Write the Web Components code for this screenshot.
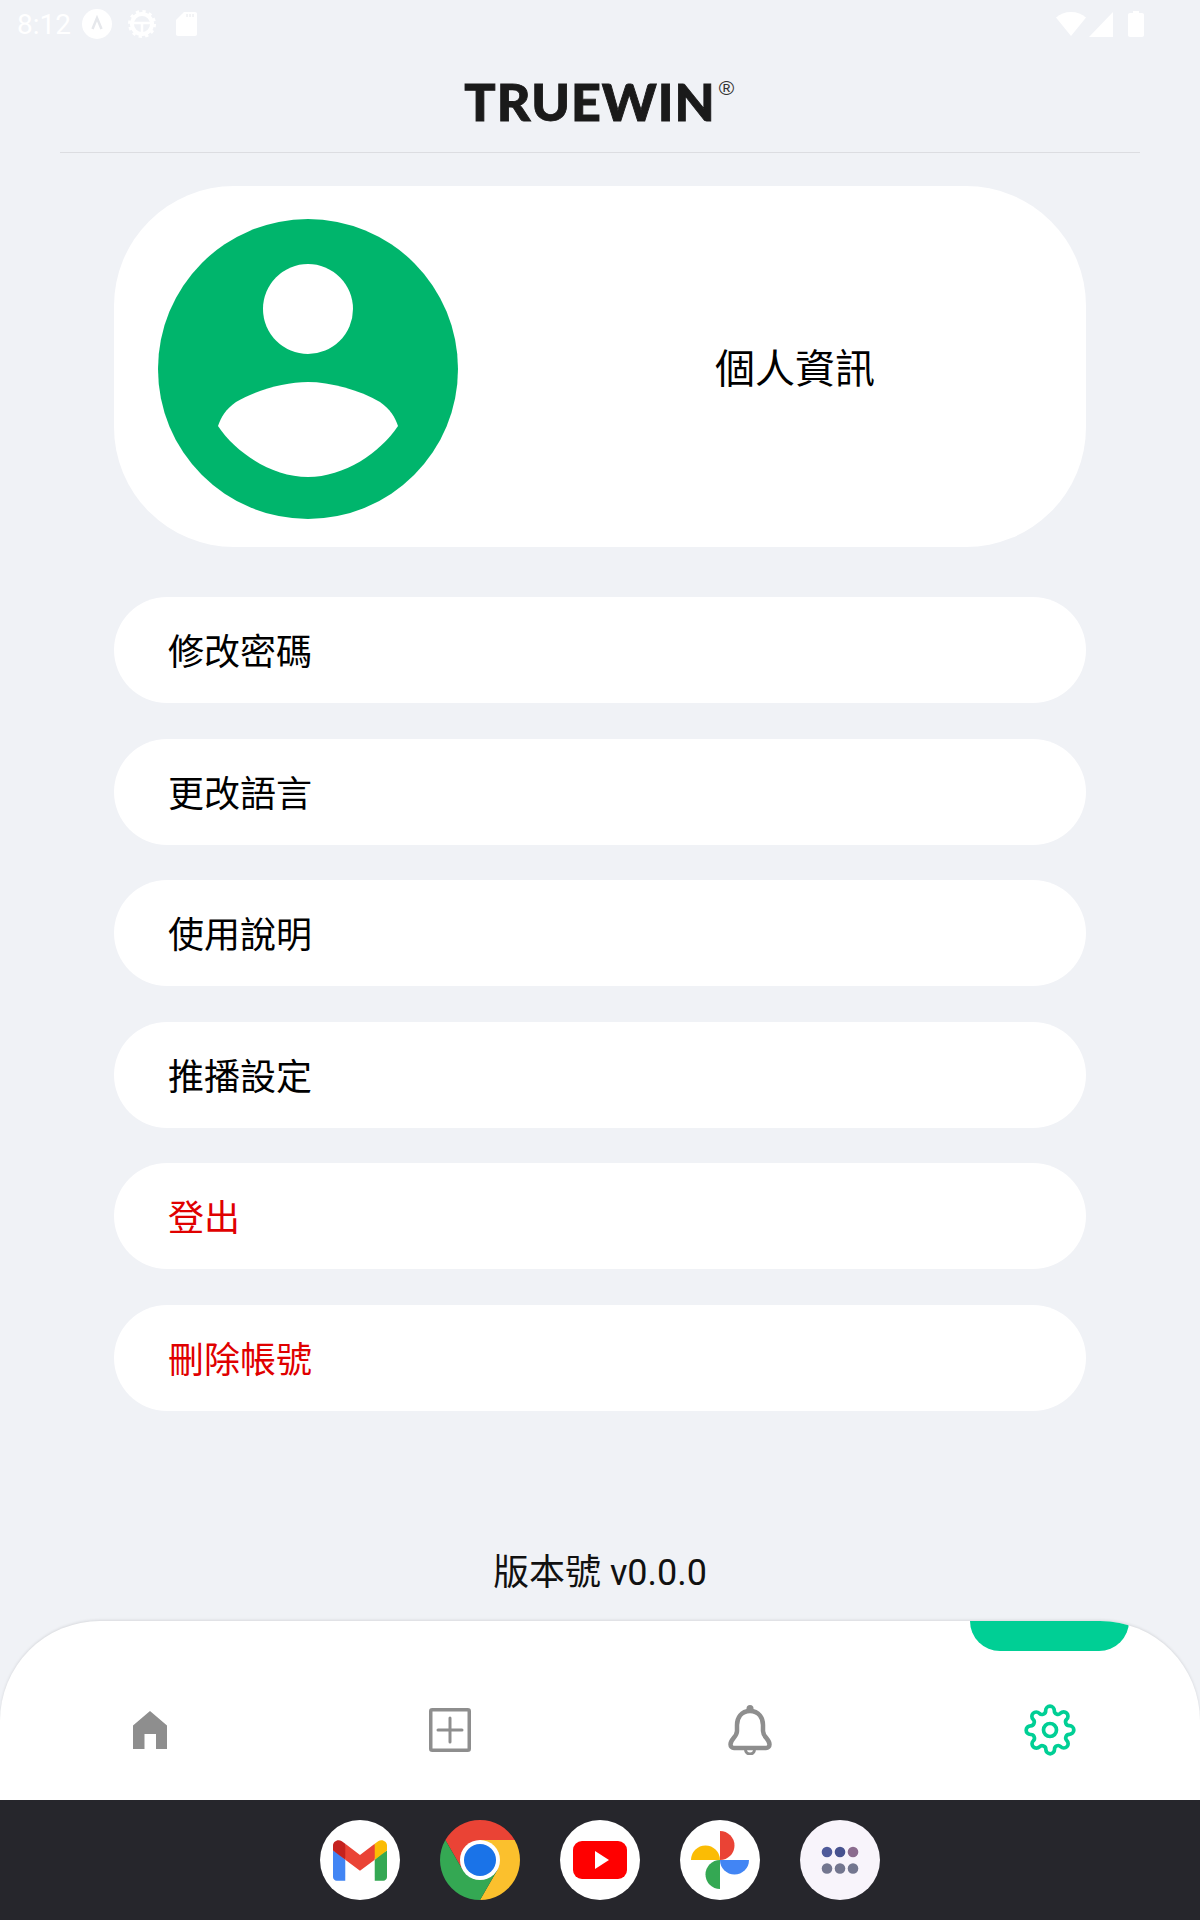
<!DOCTYPE html>
<html lang="zh-Hant">
<head>
<meta charset="utf-8">
<title>TRUEWIN</title>
<style>
  html, body { margin: 0; padding: 0; background: #f0f2f6; }
  body { font-family: Roboto, "Noto Sans CJK TC", sans-serif; }
  app-shell { width: 1200px; height: 1920px; }
</style>
</head>
<body>
<app-shell>
  <status-bar></status-bar>
  <app-header></app-header>
  <profile-card>個人資訊</profile-card>
  <menu-list>
    <menu-row>修改密碼</menu-row>
    <menu-row>更改語言</menu-row>
    <menu-row>使用說明</menu-row>
    <menu-row>推播設定</menu-row>
    <menu-row danger>登出</menu-row>
    <menu-row danger>刪除帳號</menu-row>
  </menu-list>
  <version-label>版本號 v0.0.0</version-label>
  <bottom-nav>
    <nav-item>
      <svg width="34" height="38" viewBox="0 0 34 38"><path fill="#8e8e8e" d="M17 0 34 14.500V38H23V23H11.500V38H0V14.500Z"/></svg>
    </nav-item>
    <nav-item>
      <svg width="42" height="44" viewBox="0 0 42 44" fill="none" stroke="#8e8e8e"><rect x="1.750" y="1.750" width="38.500" height="40.500" rx="1.500" stroke-width="3.500"/><path d="M9 22H33M21 10V34" stroke-width="3" stroke-linecap="round"/></svg>
    </nav-item>
    <nav-item>
      <svg width="44" height="50" viewBox="0 0 44 50" fill="none" stroke="#8e8e8e"><circle cx="22" cy="3.500" r="3.500" fill="#8e8e8e" stroke="none"/><path stroke-width="4.500" d="M22 6C13 6 9 13 9 20V26C9 32 2.500 34 2.500 39.500 2.500 41.500 4 43 6 43H38C40 43 41.500 41.500 41.500 39.500 41.500 34 35 32 35 26V20C35 13 31 6 22 6Z"/><path stroke-width="3" d="M17.500 44.500A4.500 4.500 0 0 0 26.500 44.500"/></svg>
    </nav-item>
    <nav-item active>
      <svg width="52" height="52" viewBox="0 0 24 24" fill="none" stroke="#00cf95" stroke-width="1.700" stroke-linecap="round" stroke-linejoin="round"><circle cx="12" cy="12" r="3"/><path d="M19.400 15a1.650 1.650 0 0 0 .33 1.820l.06.06a2 2 0 0 1 0 2.830 2 2 0 0 1-2.830 0l-.06-.06a1.650 1.650 0 0 0-1.820-.33 1.650 1.650 0 0 0-1 1.510V21a2 2 0 0 1-2 2 2 2 0 0 1-2-2v-.09A1.650 1.650 0 0 0 9 19.400a1.650 1.650 0 0 0-1.820.33l-.06.06a2 2 0 0 1-2.830 0 2 2 0 0 1 0-2.830l.06-.06a1.650 1.650 0 0 0 .33-1.820 1.650 1.650 0 0 0-1.510-1H3a2 2 0 0 1-2-2 2 2 0 0 1 2-2h.09A1.650 1.650 0 0 0 4.600 9a1.650 1.650 0 0 0-.33-1.820l-.06-.06a2 2 0 0 1 0-2.830 2 2 0 0 1 2.830 0l.06.06a1.650 1.650 0 0 0 1.820.33H9a1.650 1.650 0 0 0 1-1.510V3a2 2 0 0 1 2-2 2 2 0 0 1 2 2v.09a1.650 1.650 0 0 0 1 1.510 1.650 1.650 0 0 0 1.820-.33l.06-.06a2 2 0 0 1 2.830 0 2 2 0 0 1 0 2.830l-.06.06a1.650 1.650 0 0 0-.33 1.820V9a1.650 1.650 0 0 0 1.510 1H21a2 2 0 0 1 2 2 2 2 0 0 1-2 2h-.09a1.650 1.650 0 0 0-1.510 1z"/></svg>
    </nav-item>
  </bottom-nav>
  <dock-bar>
    <dock-icon>
      <svg width="54" height="41" viewBox="0 0 256 193"><path fill="#4285F4" d="M58.180 192.050V93.140L27.500 65.070 0 49.500v125.100c0 9.650 7.820 17.450 17.450 17.450h40.730z"/><path fill="#34A853" d="M197.820 192.050h40.730c9.650 0 17.450-7.820 17.450-17.450V49.500l-31.160 17.840-27.020 25.800v98.910z"/><path fill="#EA4335" d="M58.180 93.140l-4.170-38.650 4.170-36.990L128 69.870l69.820-52.370 4.670 34.990-4.670 40.650L128 145.500z"/><path fill="#FBBC04" d="M197.820 17.500v75.640L256 49.500V26.230c0-21.580-24.640-33.880-41.890-20.950l-16.290 12.220z"/><path fill="#C5221F" d="M0 49.500l26.760 20.070L58.180 93.140V17.500L41.890 5.280C24.610-7.650 0 4.650 0 26.230V49.500z"/></svg>
    </dock-icon>
    <dock-icon bare>
      <svg width="80" height="80" viewBox="0 0 80 80"><path fill="#EA4335" d="M40 40 22.680 50 5.360 20A40 40 0 0 1 74.640 20H40Z"/><path fill="#FBC02D" d="M40 40V20H74.640A40 40 0 0 1 40 80L57.320 50Z"/><path fill="#34A853" d="M40 40 57.320 50 40 80A40 40 0 0 1 5.360 20L22.680 50Z"/><circle cx="40" cy="40" r="20" fill="#fff"/><circle cx="40" cy="40" r="16" fill="#1A73E8"/></svg>
    </dock-icon>
    <dock-icon>
      <svg width="54" height="38" viewBox="0 0 54 38"><rect width="54" height="38" rx="9" fill="#f00"/><path fill="#fff" d="M22 10 36 19 22 28Z"/></svg>
    </dock-icon>
    <dock-icon>
      <svg width="58" height="58" viewBox="0 0 58 58"><path fill="#EA4335" d="M29 0A14.500 14.500 0 0 1 29 29Z"/><path fill="#FBBC04" d="M0 29A14.500 14.500 0 0 1 29 29Z"/><path fill="#4285F4" d="M58 29A14.500 14.500 0 0 1 29 29Z"/><path fill="#34A853" d="M29 58A14.500 14.500 0 0 1 29 29Z"/></svg>
    </dock-icon>
    <dock-icon tint>
      <svg width="38" height="38" viewBox="0 0 38 38"><circle cx="6" cy="11" r="5.300" fill="#4f5a9a"/><circle cx="19" cy="11" r="5.300" fill="#47528f"/><circle cx="32" cy="11" r="5.300" fill="#8b6b8e"/><circle cx="6" cy="27.500" r="5.300" fill="#73768f"/><circle cx="19" cy="27.500" r="5.300" fill="#73768f"/><circle cx="32" cy="27.500" r="5.300" fill="#73768f"/></svg>
    </dock-icon>
  </dock-bar>
</app-shell>

<script>
// small helper so every element below only has to give its html
class BaseElement extends HTMLElement {
  constructor() {
    super();
    this.attachShadow({ mode: "open" });
  }
  connectedCallback() {
    const template = document.createElement('template');
    template.innerHTML = this.getTemplate();
    this.shadowRoot.appendChild(template.content.cloneNode(true));
  }
}

class AppShell extends BaseElement {
  getTemplate() {
    return `
      <style>
        :host { display: flex; flex-direction: column; overflow: hidden; background: #f0f2f6; }
      </style>
      <slot></slot>
    `;
  }
}

class StatusBar extends BaseElement {
  getTemplate() {
    return `
      <style>
        :host {
          display: flex; align-items: center; height: 48px; padding: 0 56px 0 17px;
          box-sizing: border-box; color: #fff; font: 400 28px Roboto, sans-serif;
        }
        svg { display: block; }
        .time { width: 65px; }
        .wheel { margin-left: 16px; }
        .card { margin-left: 20px; }
        .right { margin-left: auto; display: flex; align-items: center; }
      </style>
      <span class="time">8:12</span>
      <svg width="30" height="30" viewBox="0 0 30 30"><circle cx="15" cy="15" r="15" fill="#fff"/><path d="M10.500 20 15 9 19.500 20" fill="none" stroke="#e6e8ec" stroke-width="2.500"/></svg>
      <svg class="wheel" width="28" height="28" viewBox="0 0 28 28" fill="none" stroke="#fff"><circle cx="14" cy="14" r="10" stroke-width="4"/><circle cx="14" cy="14" r="12.500" stroke-width="3" stroke-dasharray="3.200 3.350"/><path d="M4 13H24M14 13V24" stroke-width="2.500"/></svg>
      <svg class="card" width="21" height="24" viewBox="0 0 21 24"><path fill="#fff" d="M8 0H19C20.200 0 21 .8 21 2V22C21 23.200 20.200 24 19 24H2C.8 24 0 23.200 0 22V8Z"/><path stroke="#e6e8ec" stroke-width="1" d="M11 2V5M14 2V5M17 2V5"/></svg>
      <div class="right">
        <svg width="30" height="24" viewBox="0 0 30 24"><path fill="#fff" d="M0 5.500C4 2 9 0 15 0S26 2 30 5.500L15 24Z"/></svg>
        <svg style="margin-left:3px" width="24" height="25" viewBox="0 0 24 25"><path fill="#fff" d="M24 0V25H0Z"/></svg>
        <svg style="margin-left:15px" width="16" height="26" viewBox="0 0 16 26"><path fill="#fff" d="M5 0H11V2H14C15.200 2 16 2.800 16 4V24C16 25.200 15.200 26 14 26H2C.8 26 0 25.200 0 24V4C0 2.800 .8 2 2 2H5Z"/></svg>
      </div>
    `;
  }
}

class AppHeader extends BaseElement {
  getTemplate() {
    return `
      <style>
        :host {
          display: flex; justify-content: center; align-items: flex-start;
          height: 105px; margin: 0 60px; box-sizing: border-box;
          border-bottom: 1px solid #dcdde1;
        }
        .logo {
          position: relative; margin: 23px 20px 0 0;
          font: 900 52px/60px Lato, sans-serif; color: #1a1a1a; letter-spacing: 1px;
          -webkit-text-stroke: .9px #1a1a1a;
        }
        sup {
          position: absolute; left: 100%; top: 7px; margin-left: 3px;
          font: 400 21px/20px "Liberation Sans", sans-serif; color: #333;
          -webkit-text-stroke: 0;
        }
      </style>
      <div class="logo">TRUEWIN<sup>®</sup></div>
    `;
  }
}

class ProfileCard extends BaseElement {
  getTemplate() {
    return `
      <style>
        :host {
          display: flex; align-items: center; height: 361px; margin: 33px 114px 0;
          padding-left: 44px; border-radius: 120px; background: #fff; color: #000;
          font: 400 40px "Noto Sans CJK TC", sans-serif;
        }
        svg { display: block; flex: none; margin-top: 4px; }
        .label { flex: 1; text-align: center; padding: 0 0 2px 46px; }
      </style>
      <svg width="300" height="300" viewBox="0 0 300 300">
        <circle cx="150" cy="150" r="150" fill="#00b56c"/>
        <circle cx="150" cy="90" r="45" fill="#fff"/>
        <path fill="#fff" d="M60 207C63 198 68 190 78 183 98 171 128 163 150 163 172 163 202 171 222 183 232 190 237 198 240 207 222 234 186 258 150 258 114 258 78 234 60 207Z"/>
      </svg>
      <div class="label"><slot></slot></div>
    `;
  }
}

class MenuList extends BaseElement {
  getTemplate() {
    return `
      <style>
        :host { display: grid; gap: 35.500px; margin: 50px 114px 0; }
      </style>
      <slot></slot>
    `;
  }
}

class MenuRow extends BaseElement {
  getTemplate() {
    return `
      <style>
        :host {
          display: flex; align-items: center; height: 106px; padding: 0 0 2px 54px;
          box-sizing: border-box;
          border-radius: 53px; background: #fff; color: #000;
          font: 400 36px "Noto Sans CJK TC", sans-serif;
        }
        :host([danger]) { color: #e00000; }
      </style>
      <slot></slot>
    `;
  }
}

class VersionLabel extends BaseElement {
  getTemplate() {
    return `
      <style>
        :host {
          display: block; margin-top: 136px; text-align: center; color: #111;
          font: 400 36px/52px Roboto, "Noto Sans CJK TC", sans-serif;
        }
      </style>
      <slot></slot>
    `;
  }
}

class BottomNav extends BaseElement {
  getTemplate() {
    return `
      <style>
        :host {
          display: grid; grid-template-columns: repeat(4, 1fr); height: 179px;
          margin-top: auto; background: #fff; border-radius: 100px 100px 0 0;
          box-shadow: 0 -1px 3px rgba(0, 0, 0, .1); overflow: hidden;
        }
      </style>
      <slot></slot>
    `;
  }
}

class NavItem extends BaseElement {
  getTemplate() {
    return `
      <style>
        :host {
          display: flex; justify-content: center; align-items: center; position: relative;
          padding-top: 38px;
        }
        :host([active])::before {
          content: ""; position: absolute; top: 0; left: 70px; width: 159px; height: 30px;
          background: #00cf95; border-radius: 0 0 32px 32px;
        }
        ::slotted(svg) { display: block; }
      </style>
      <slot></slot>
    `;
  }
}

class DockBar extends BaseElement {
  getTemplate() {
    return `
      <style>
        :host {
          display: flex; justify-content: center; align-items: center; gap: 40px;
          height: 120px; background: #26262c;
        }
      </style>
      <slot></slot>
    `;
  }
}

class DockIcon extends BaseElement {
  getTemplate() {
    return `
      <style>
        :host {
          display: flex; justify-content: center; align-items: center;
          width: 80px; height: 80px; border-radius: 50%; background: #fff;
        }
        :host([tint]) { background: #f8f4fb; }
        :host([bare]) { background: none; }
        ::slotted(svg) { display: block; }
      </style>
      <slot></slot>
    `;
  }
}

customElements.define('app-shell', AppShell);
customElements.define('status-bar', StatusBar);
customElements.define('app-header', AppHeader);
customElements.define('profile-card', ProfileCard);
customElements.define('menu-list', MenuList);
customElements.define('menu-row', MenuRow);
customElements.define('version-label', VersionLabel);
customElements.define('bottom-nav', BottomNav);
customElements.define('nav-item', NavItem);
customElements.define('dock-bar', DockBar);
customElements.define('dock-icon', DockIcon);
</script>
</body>
</html>
